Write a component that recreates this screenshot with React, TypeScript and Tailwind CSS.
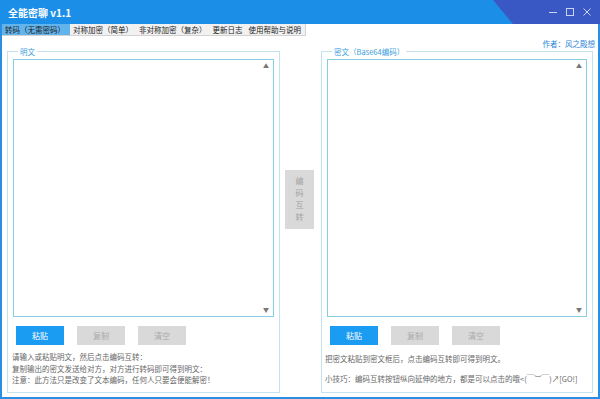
import React from "react";

const tabs = ["转码（无需密码）", "对称加密（简单）", "非对称加密（复杂）", "更新日志", "使用帮助与说明"];

const TextBox = () => (
  <div className="relative h-[258px] border border-[#86cfe0] bg-white">
    <span className="absolute right-[4px] top-[3px] text-[6px] leading-none text-[#777]">▲</span>
    <span className="absolute right-[4px] bottom-[3px] text-[6px] leading-none text-[#777]">▼</span>
  </div>
);

const Buttons = () => (
  <div className="mt-[9px] flex gap-[13px] pl-[3px]">
    <button className="flex h-[19px] w-[48px] items-center justify-center bg-[#1a9cf2] text-[8px] text-white">粘贴</button>
    <button className="flex h-[19px] w-[48px] items-center justify-center bg-[#d9d9d9] text-[8px] text-[#a9a9a9]">复制</button>
    <button className="flex h-[19px] w-[48px] items-center justify-center bg-[#d9d9d9] text-[8px] text-[#a9a9a9]">清空</button>
  </div>
);

export default function App() {
  return (
    <div className="flex h-[399px] w-[600px] flex-col overflow-hidden bg-[#2a8fe2] font-['Microsoft_YaHei','Noto_Sans_CJK_SC',sans-serif]">
      {/* title bar */}
      <div className="relative flex h-[24px] shrink-0 items-center bg-[#1b8fe8] pl-[8px]">
        <div className="absolute inset-0 bg-[#3a58c4] [clip-path:polygon(493px_0,600px_0,600px_24px,513px_24px)]" />
        <span className="relative text-[10px] font-bold text-white">全能密聊 v1.1</span>
        <div className="relative ml-auto flex items-center gap-[7px] pr-[8px] text-[#c9d3f3]">
          <svg width="10" height="10" viewBox="0 0 10 10"><path d="M1 5.5h8" stroke="currentColor" strokeWidth="1" /></svg>
          <svg width="10" height="10" viewBox="0 0 10 10"><rect x="1.5" y="1.5" width="7" height="7" fill="none" stroke="currentColor" strokeWidth="1" /></svg>
          <svg width="10" height="10" viewBox="0 0 10 10"><path d="M1.5 1.5l7 7M8.5 1.5l-7 7" stroke="currentColor" strokeWidth="1" /></svg>
        </div>
      </div>

      <div className="mx-[2px] mb-[2px] flex flex-1 flex-col bg-white">
        {/* tabs */}
        <div className="flex h-[12px] w-fit shrink-0 items-stretch whitespace-nowrap border-r border-b border-[#d2d2d2] bg-[#f1f1f1] pr-[1px] text-[7.5px] leading-[12px] text-[#222]">
          {tabs.map((t, i) => (
            <div key={t} className={i === 0 ? "bg-[#62b4ec] pl-[3px] pr-[5px]" : "px-[3px]"}>
              {t}
            </div>
          ))}
        </div>

        <div className="flex h-[13px] items-end justify-end pr-[3px] text-[7.5px] leading-[10px] text-[#2b86d8]">作者：风之殿想</div>

        <div className="flex flex-1 pl-[5px] pb-[4px]">
          {/* left */}
          <fieldset className="-mt-[2px] w-[273px] border border-[#c3e2ec] px-[5px] pb-[4px]">
            <legend className="ml-[5px] px-[2px] text-[7.5px] leading-[9px] text-[#3aa0e0]">明文</legend>
            <div className="mt-[3px]">
              <TextBox />
            </div>
            <Buttons />
            <div className="mt-[6px] -ml-[1px] text-[7.5px] leading-[11.5px] text-[#666]">
              <p>请输入或粘贴明文，然后点击编码互转：</p>
              <p>复制输出的密文发送给对方，对方进行转码即可得到明文：</p>
              <p>注意：此方法只是改变了文本编码，任何人只要会便能解密！</p>
            </div>
          </fieldset>

          {/* middle */}
          <div className="flex w-[41px] shrink-0 items-center pb-[44px]">
            <button className="ml-[5px] flex h-[59px] w-[29px] flex-col items-center justify-center bg-[#d9d9d9] text-[8px] leading-[12px] text-[#a3a3a3]">
              <span>编</span>
              <span>码</span>
              <span>互</span>
              <span>转</span>
            </button>
          </div>

          {/* right */}
          <fieldset className="-mt-[2px] w-[272px] border border-[#c3e2ec] px-[5px] pb-[4px]">
            <legend className="ml-[5px] px-[2px] text-[7.5px] leading-[9px] text-[#3aa0e0]">密文（Base64编码）</legend>
            <div className="mt-[3px]">
              <TextBox />
            </div>
            <Buttons />
            <div className="mt-[8px] -ml-[2px] text-[7.5px] leading-[11px] text-[#666]">
              <p>把密文粘贴到密文框后，点击编码互转即可得到明文。</p>
              <p className="mt-[9px]">小技巧：编码互转按钮纵向延伸的地方，都是可以点击的哦&lt;(￣︶￣)↗[GO!]</p>
            </div>
          </fieldset>
          <div className="w-[4px]" />
        </div>
      </div>
    </div>
  );
}
